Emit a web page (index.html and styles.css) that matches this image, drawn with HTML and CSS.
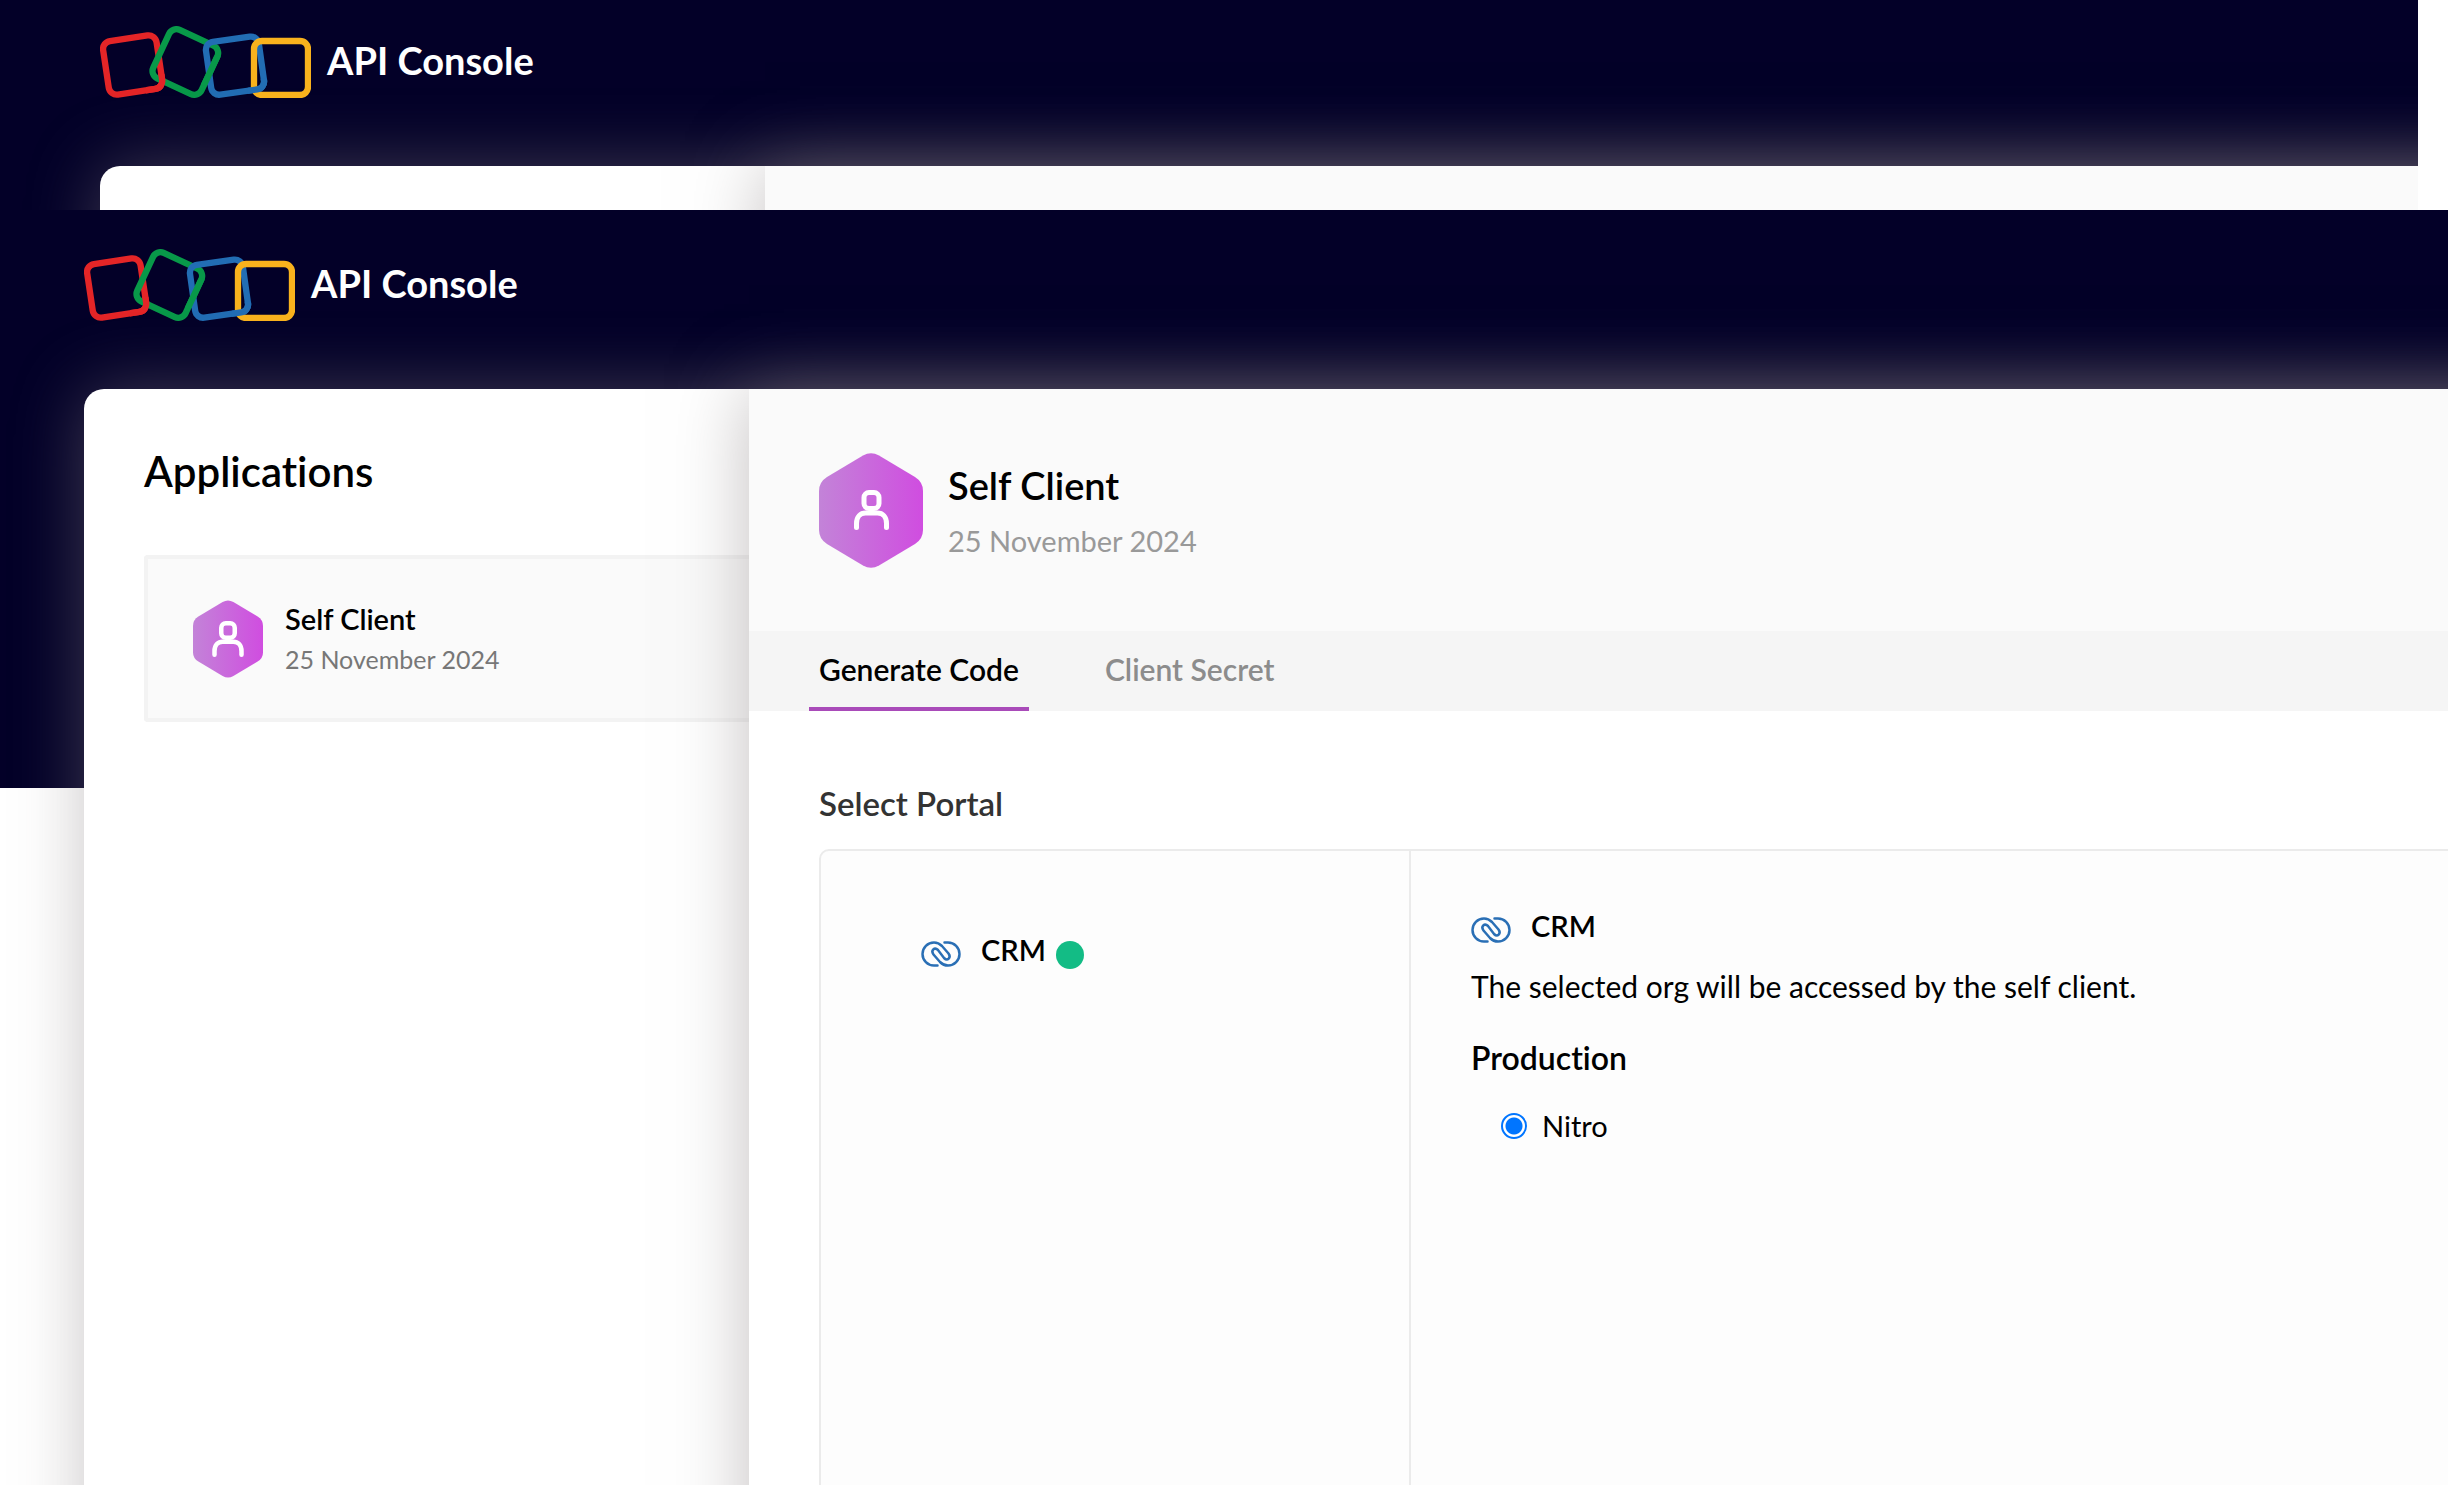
FILE: index.html
```
<!DOCTYPE html>
<html lang="en">
<head>
    <meta charset="UTF-8">
    <meta name="viewport" content="width=device-width, initial-scale=1.0">
    <title>API Console</title>
    <link rel="stylesheet" href="styles.css">
</head>
<body>

    <!-- Shared icons -->
    <svg class="sprite" aria-hidden="true">
        <defs>
            <linearGradient id="hexFill" x1="0" y1="0" x2="1" y2="0">
                <stop offset="0" stop-color="#c383d8"/>
                <stop offset="1" stop-color="#d04de0"/>
            </linearGradient>
            <clipPath id="redFront"><rect x="150" y="200" width="80" height="70"/></clipPath>
            <clipPath id="greenFront"><rect x="315" y="145" width="70" height="90"/></clipPath>
            <clipPath id="blueFront"><rect x="455" y="215" width="70" height="70"/></clipPath>
        </defs>
        <symbol id="logo" viewBox="12 57 633 216">
            <g fill="none" stroke-width="19">
                <rect id="ringRed" x="29" y="93" width="162" height="162" rx="24" transform="rotate(-8.5 110 174)" stroke="#e42527"/>
                <rect id="ringGreen" x="188" y="85" width="160" height="160" rx="24" transform="rotate(25 268 165)" stroke="#089949"/>
                <rect id="ringBlue" x="337" y="96" width="160" height="160" rx="24" transform="rotate(-8 417 176)" stroke="#226db4"/>
                <rect x="474" y="102" width="162" height="162" rx="24" stroke="#f9b21d"/>
                <g clip-path="url(#redFront)"><use href="#ringRed"/></g>
                <g clip-path="url(#greenFront)"><use href="#ringGreen"/></g>
                <g clip-path="url(#blueFront)"><use href="#ringBlue"/></g>
            </g>
        </symbol>
        <symbol id="hexagon" viewBox="0 0 104 115">
            <path fill="url(#hexFill)" d="M44 2.500q8-4.500 16 0l36 21.500q8 5 8 14v39q0 9-8 14l-36 21.500q-8 4.500-16 0l-36-21.500q-8-5-8-14v-39q0-9 8-14z"/>
        </symbol>
        <symbol id="person" viewBox="0 0 35 40">
            <g fill="none" stroke="#fff" stroke-width="5" stroke-linecap="round">
                <rect x="10" y="2.500" width="15" height="16" rx="5"/>
                <path d="M2.500 37.500v-4c0-7 4-10.500 9-10.500h12c5 0 9 3.500 9 10.500v4"/>
            </g>
        </symbol>
        <symbol id="crm" viewBox="0 0 40 26">
            <path fill="none" stroke="#2a6fb5" stroke-width="2.500" stroke-linecap="round" d="M16.500 24.500H13A11.500 11.500 0 0 1 13 1.500C17 1.500 19 3 21 5L27.500 12.500C30.500 16.500 26.500 20.500 23 17L17 9C13.500 5.500 9.500 9.500 12.500 13.500L19 21C21 23 23 24.500 27 24.500A11.500 11.500 0 0 0 27 1.500H23.500"/>
        </symbol>
    </svg>

    <section class="window window-back">
        <header class="topbar">
            <svg class="logo"><use href="#logo"/></svg>
            <span class="brand">API Console</span>
        </header>
        <div class="panel">
            <div class="sidebar"></div>
            <div class="detail">
                <div class="detail-head"></div>
            </div>
        </div>
    </section>

    <section class="window window-front">
        <header class="topbar">
            <svg class="logo"><use href="#logo"/></svg>
            <h1 class="brand">API Console</h1>
        </header>

        <main class="panel">
            <aside class="sidebar">
                <h2 class="sidebar-title">Applications</h2>
                <a href="#" class="app">
                    <span class="avatar">
                        <svg class="avatar-shape"><use href="#hexagon"/></svg>
                        <svg class="avatar-person"><use href="#person"/></svg>
                    </span>
                    <span class="app-text">
                        <span class="app-name">Self Client</span>
                        <span class="app-date">25 November 2024</span>
                    </span>
                </a>
            </aside>

            <div class="detail">
                <div class="detail-head">
                    <span class="avatar avatar-large">
                        <svg class="avatar-shape"><use href="#hexagon"/></svg>
                        <svg class="avatar-person"><use href="#person"/></svg>
                    </span>
                    <div class="detail-text">
                        <h2 class="detail-name">Self Client</h2>
                        <p class="detail-date">25 November 2024</p>
                    </div>
                </div>

                <nav class="tabs">
                    <button type="button" class="tab active">Generate Code</button>
                    <button type="button" class="tab">Client Secret</button>
                </nav>

                <div class="content">
                    <h3 class="content-title">Select Portal</h3>
                    <div class="portal">
                        <div class="portal-list">
                            <button type="button" class="service">
                                <svg class="crm-icon"><use href="#crm"/></svg>
                                <span>CRM</span>
                                <span class="dot"></span>
                            </button>
                        </div>
                        <div class="portal-info">
                            <h4 class="service">
                                <svg class="crm-icon"><use href="#crm"/></svg>
                                <span>CRM</span>
                            </h4>
                            <p class="portal-note">The selected org will be accessed by the self client.</p>
                            <h5 class="portal-env">Production</h5>
                            <div class="org">
                                <input type="radio" id="org-nitro" name="org" checked>
                                <label for="org-nitro">Nitro</label>
                            </div>
                        </div>
                    </div>
                </div>
            </div>
        </main>
    </section>

</body>
</html>
```
FILE: styles.css
```
* {
    box-sizing: border-box;
}

body {
    display: flex;
    flex-direction: column;
    height: 100vh;
    margin: 0;
    overflow: hidden;
    background-color: #fff;
    color: #000;
    font-family: Lato, sans-serif;
    font-size: 29px;
    font-variant-ligatures: none;
}

h1, h2, h3, h4, h5, p {
    margin: 0;
}

button {
    padding: 0;
    border: none;
    background: none;
    color: inherit;
    font-family: inherit;
    cursor: pointer;
}

svg {
    display: block;
}

.sprite {
    position: absolute;
    width: 0;
    height: 0;
}

/* Console windows */
.window {
    display: flex;
    flex-direction: column;
    overflow: hidden;
    background: linear-gradient(#030028 578px, #fff 578px);
}

.window-back {
    height: 210px;
    margin-right: 30px;
    padding: 26px 0 0 100px;
}

.window-front {
    flex: 1;
    padding: 39px 0 0 84px;
}

.topbar {
    display: flex;
    align-items: center;
    gap: 16px;
    flex-shrink: 0;
    height: 72px;
    margin-bottom: 68px;
}

.logo {
    width: 211px;
    height: 72px;
}

.brand {
    padding-bottom: 4px;
    color: #fff;
    font-size: 38px;
    font-weight: 700;
    line-height: 40px;
}

/* The panel runs past the right and bottom edges of its window */
.panel {
    display: flex;
    flex: 1 0 auto;
    margin: 0 -120px -120px 0;
    border-radius: 20px 0 0 0;
    background-color: #fff;
    box-shadow: 0 0 70px rgba(135, 128, 130, 0.45);
}

.sidebar {
    flex: 0 0 665px;
    padding: 58px 0 0 60px;
}

.sidebar-title {
    margin-bottom: 60px;
    font-size: 42px;
    font-weight: 600;
    line-height: 48px;
}

.app {
    display: flex;
    align-items: center;
    gap: 22px;
    height: 167px;
    padding-left: 45px;
    border: 4px solid #f3f3f3;
    border-right: none;
    border-radius: 4px 0 0 4px;
    background-color: #fafafa;
    color: #000;
    text-decoration: none;
}

.app-text {
    display: flex;
    flex-direction: column;
    gap: 4px;
}

.app-name {
    font-size: 29px;
    font-weight: 600;
    line-height: 36px;
}

.app-date {
    color: #777;
    font-size: 25px;
    line-height: 36px;
}

/* Hexagon avatar */
.avatar {
    display: grid;
    place-items: center;
}

.avatar > svg {
    grid-area: 1 / 1;
}

.avatar-shape {
    width: 70px;
    height: 78px;
}

.avatar-person {
    width: 32px;
    height: 36px;
}

.avatar-large .avatar-shape {
    width: 104px;
    height: 115px;
}

.avatar-large .avatar-person {
    width: 35px;
    height: 40px;
}

/* Right side */
.detail {
    display: flex;
    flex: 1;
    flex-direction: column;
    background-color: #fff;
    box-shadow: 0 0 70px rgba(135, 128, 130, 0.5);
}

.detail-head {
    display: flex;
    align-items: center;
    gap: 25px;
    height: 242px;
    padding-left: 70px;
    background-color: #fafafa;
}

.detail-text {
    display: flex;
    flex-direction: column;
    gap: 14px;
}

.detail-name {
    font-size: 38px;
    font-weight: 600;
    line-height: 48px;
}

.detail-date {
    color: #999;
    font-size: 29px;
    line-height: 36px;
}

.tabs {
    display: flex;
    gap: 66px;
    height: 80px;
    padding-left: 60px;
    background-color: #f5f5f5;
}

.tab {
    padding: 0 10px;
    border-bottom: 4px solid transparent;
    color: #8c8c8c;
    font-size: 30px;
    font-weight: 600;
}

.tab.active {
    border-color: #a94bb9;
    color: #000;
}

.content {
    display: flex;
    flex: 1;
    flex-direction: column;
    padding: 72px 0 0 70px;
}

.content-title {
    margin-bottom: 26px;
    color: #333;
    font-size: 33px;
    font-weight: 600;
    line-height: 40px;
}

.portal {
    display: flex;
    flex: 1;
    border: 2px solid #ebebeb;
    border-radius: 10px 0 0 0;
    background-color: #fdfdfd;
}

.portal-list {
    flex: 0 0 590px;
    padding: 80px 0 0 100px;
    border-right: 2px solid #ebebeb;
}

.portal-info {
    flex: 1;
    padding: 57px 0 0 60px;
}

.service {
    display: flex;
    align-items: center;
    gap: 20px;
    font-size: 29px;
    font-weight: 600;
    line-height: 36px;
}

.crm-icon {
    width: 40px;
    height: 26px;
    margin-top: 7px;
}

.dot {
    width: 28px;
    height: 28px;
    margin: 10px 0 0 -10px;
    border-radius: 50%;
    background-color: #13bc85;
}

.portal-note {
    margin-top: 24px;
    font-size: 30px;
    line-height: 36px;
}

.portal-env {
    margin-top: 34px;
    font-size: 32px;
    font-weight: 600;
    line-height: 40px;
}

.org {
    display: flex;
    align-items: center;
    gap: 15px;
    margin-top: 30px;
    padding-left: 30px;
    line-height: 36px;
}

.org input {
    appearance: none;
    width: 26px;
    height: 26px;
    margin: 0;
    border: 2px solid #0075ff;
    border-radius: 50%;
    background-color: #fff;
}

.org input:checked {
    background: radial-gradient(circle, #0075ff 8px, #fff 9px);
}
```
